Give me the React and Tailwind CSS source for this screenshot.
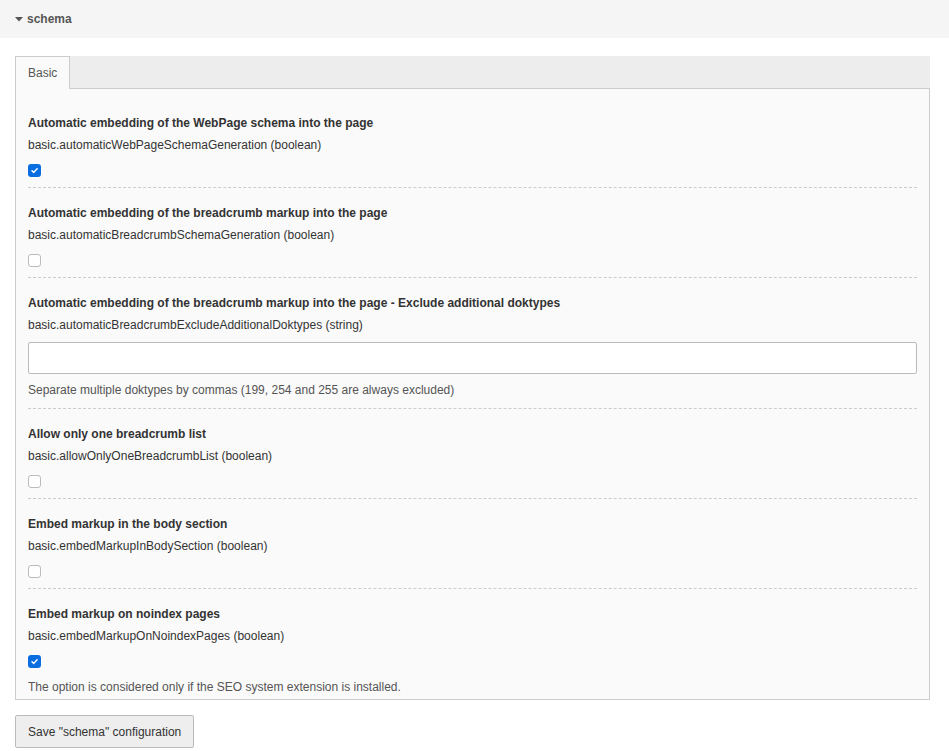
import React from "react";

const items = [
  { title: "Automatic embedding of the WebPage schema into the page", key: "basic.automaticWebPageSchemaGeneration (boolean)", type: "check", checked: true },
  { title: "Automatic embedding of the breadcrumb markup into the page", key: "basic.automaticBreadcrumbSchemaGeneration (boolean)", type: "check", checked: false },
  { title: "Automatic embedding of the breadcrumb markup into the page - Exclude additional doktypes", key: "basic.automaticBreadcrumbExcludeAdditionalDoktypes (string)", type: "text", help: "Separate multiple doktypes by commas (199, 254 and 255 are always excluded)" },
  { title: "Allow only one breadcrumb list", key: "basic.allowOnlyOneBreadcrumbList (boolean)", type: "check", checked: false },
  { title: "Embed markup in the body section", key: "basic.embedMarkupInBodySection (boolean)", type: "check", checked: false },
  { title: "Embed markup on noindex pages", key: "basic.embedMarkupOnNoindexPages (boolean)", type: "check", checked: true, help: "The option is considered only if the SEO system extension is installed.", last: true },
];

function Check({ checked }) {
  if (checked) {
    return (
      <div className="w-[13px] h-[13px] rounded-[3px] bg-[#0b6ee0] flex items-center justify-center">
        <svg width="9" height="9" viewBox="0 0 10 10">
          <path d="M2.2 5.2 L4.2 7.1 L7.9 3" fill="none" stroke="white" strokeWidth="1.6" strokeLinecap="round" strokeLinejoin="round" />
        </svg>
      </div>
    );
  }
  return <div className="w-[13px] h-[13px] rounded-[3px] border border-[#bbbbbb] bg-white" />;
}

export default function App() {
  return (
    <div className="min-h-[751px] bg-white text-[12px] text-[#333] leading-[20px]" style={{ fontFamily: '"Liberation Sans", Arial, sans-serif' }}>
      <div className="h-[38px] bg-[#f5f5f5] flex items-center px-[15px]">
        <svg width="8" height="5" viewBox="0 0 8 5" className="mr-[4px]">
          <path d="M0 0 L8 0 L4 4.5 Z" fill="#555" />
        </svg>
        <span className="font-bold text-[#555]">schema</span>
      </div>
      <div className="px-[15px] pt-[18px]">
        <div className="w-[915px]">
          <div className="h-[33px] bg-[#ededed] border-b border-[#cccccc] flex">
            <div className="h-[33px] w-[55px] border border-b-0 border-[#cccccc] bg-[#fafafa] text-[#555] flex items-center px-[12px]">Basic</div>
          </div>
          <div className="border border-t-0 border-[#cccccc] bg-[#fafafa] px-[12px] pt-[9px] pb-[2px]">
            {items.map((it, i) => (
              <div key={i} className={(it.last ? "" : "border-b border-dashed border-[#cccccc] ") + "pt-[15px] " + (it.last ? "" : it.type === "text" ? "pb-[8px]" : "pb-[10px]")}>
                <div className="font-bold">{it.title}</div>
                <div className="mt-[2px]">{it.key}</div>
                {it.type === "check" ? (
                  <div className="mt-[9px]"><Check checked={it.checked} /></div>
                ) : (
                  <div className="mt-[7px] h-[32px] border border-[#bbbbbb] rounded-[2px] bg-white" />
                )}
                {it.help && <div className={(it.type === "text" ? "mt-[6px]" : "mt-[9px]") + " text-[#555]"}>{it.help}</div>}
              </div>
            ))}
          </div>
          <div className="mt-[15px]">
            <button className="h-[33px] px-[12px] bg-[#eeeeee] border border-[#bbbbbb] rounded-[2px] text-[#333] text-[12px]">Save "schema" configuration</button>
          </div>
        </div>
      </div>
    </div>
  );
}
